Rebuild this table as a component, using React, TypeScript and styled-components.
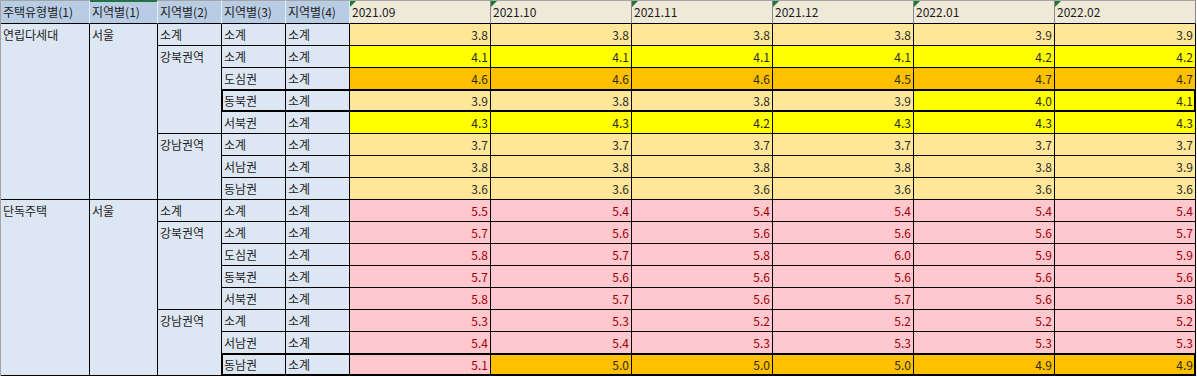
import React from "react";
import styled, { createGlobalStyle, css } from "styled-components";

const GlobalStyle = createGlobalStyle`
  html, body { margin: 0; padding: 0; background: #ffffff; }
  body { font-family: "Noto Sans CJK KR", "Noto Sans", sans-serif; }
`;

type Tone = "sand" | "yellow" | "amber" | "rose";
type Edge = "start" | "mid" | "end";

const toneBg: Record<Tone, string> = {
  sand: "#ffe699",
  yellow: "#ffff00",
  amber: "#ffc000",
  rose: "#ffc7ce",
};
const toneInk: Record<Tone, string> = {
  sand: "#2b2b2b",
  yellow: "#2b2b10",
  amber: "#2b2b10",
  rose: "#9c0006",
};

const Sheet = styled.div`
  display: grid;
  grid-template-columns: 89px 68px 64px 64px 64px repeat(6, 141px);
  grid-template-rows: 24px repeat(16, 22px);
  width: max-content;
  border-left: 1px solid #a3a3a3;
  font-size: 12px;
  color: #1c1c1c;
`;

const HeadCell = styled.div<{ $kind: "dim" | "date"; $active?: boolean }>`
  position: relative;
  box-sizing: border-box;
  border-top: 1px solid ${(p) => (p.$active ? "#217346" : "#a3a3a3")};
  border-bottom: 1px solid #000;
  border-right: 1px solid ${(p) => (p.$kind === "dim" ? "#e4ebf4" : "#8a8a8a")};
  background: ${(p) => (p.$kind === "dim" ? "#b8cce4" : "#efe9d8")};
  ${(p) => p.$active && css`box-shadow: inset 0 1px 0 #217346;`}
  padding: 0 2px;
  line-height: 22px;
  white-space: nowrap;
  overflow: hidden;
  ${(p) =>
    p.$kind === "date" &&
    css`
      &::before {
        content: "";
        position: absolute;
        top: 0;
        left: 0;
        border-top: 6px solid #1d7a35;
        border-right: 6px solid transparent;
      }
    `}
`;

const frameShadow = (framed?: boolean, edge?: Edge) => {
  if (!framed) return "";
  const s = ["inset 0 1px 0 #000", "inset 0 -1px 0 #000"];
  if (edge === "start") s.push("inset 1px 0 0 #000");
  if (edge === "end") s.push("inset -1px 0 0 #000");
  return css`box-shadow: ${s.join(", ")};`;
};

const LabelCell = styled.div<{ $span?: number; $framed?: boolean; $edge?: Edge }>`
  box-sizing: border-box;
  grid-row: span ${(p) => p.$span ?? 1};
  background: #dde7f3;
  border-right: 1px solid #000;
  border-bottom: 1px solid #000;
  padding: 0 2px;
  line-height: 21px;
  white-space: nowrap;
  overflow: hidden;
  ${(p) => frameShadow(p.$framed, p.$edge)}
`;

const ValueCell = styled.div<{ $tone: Tone; $framed?: boolean; $edge?: Edge }>`
  box-sizing: border-box;
  background: ${(p) => toneBg[p.$tone]};
  color: ${(p) => toneInk[p.$tone]};
  border-right: 1px solid #000;
  border-bottom: 1px solid #000;
  padding: 0 2px 0 0;
  text-align: right;
  line-height: 21px;
  white-space: nowrap;
  ${(p) => frameShadow(p.$framed, p.$edge)}
`;

type Span = [string, number];
interface Row {
  house?: Span;
  city?: Span;
  zone?: Span;
  sub: string;
  values: string;
  tones: Tone[];
  framed?: boolean;
}

const S: Tone = "sand";
const Y: Tone = "yellow";
const A: Tone = "amber";
const R: Tone = "rose";
const all = (t: Tone): Tone[] => [t, t, t, t, t, t];

const rows: Row[] = [
  { house: ["연립다세대", 8], city: ["서울", 8], zone: ["소계", 1], sub: "소계", values: "3.8 3.8 3.8 3.8 3.9 3.9", tones: all(S) },
  { zone: ["강북권역", 4], sub: "소계", values: "4.1 4.1 4.1 4.1 4.2 4.2", tones: all(Y) },
  { sub: "도심권", values: "4.6 4.6 4.6 4.5 4.7 4.7", tones: all(A) },
  { sub: "동북권", values: "3.9 3.8 3.8 3.9 4.0 4.1", tones: [S, S, S, S, Y, Y], framed: true },
  { sub: "서북권", values: "4.3 4.3 4.2 4.3 4.3 4.3", tones: all(Y) },
  { zone: ["강남권역", 3], sub: "소계", values: "3.7 3.7 3.7 3.7 3.7 3.7", tones: all(S) },
  { sub: "서남권", values: "3.8 3.8 3.8 3.8 3.8 3.9", tones: all(S) },
  { sub: "동남권", values: "3.6 3.6 3.6 3.6 3.6 3.6", tones: all(S) },
  { house: ["단독주택", 8], city: ["서울", 8], zone: ["소계", 1], sub: "소계", values: "5.5 5.4 5.4 5.4 5.4 5.4", tones: all(R) },
  { zone: ["강북권역", 4], sub: "소계", values: "5.7 5.6 5.6 5.6 5.6 5.7", tones: all(R) },
  { sub: "도심권", values: "5.8 5.7 5.8 6.0 5.9 5.9", tones: all(R) },
  { sub: "동북권", values: "5.7 5.6 5.6 5.6 5.6 5.6", tones: all(R) },
  { sub: "서북권", values: "5.8 5.7 5.6 5.7 5.6 5.8", tones: all(R) },
  { zone: ["강남권역", 3], sub: "소계", values: "5.3 5.3 5.2 5.2 5.2 5.2", tones: all(R) },
  { sub: "서남권", values: "5.4 5.4 5.3 5.3 5.3 5.3", tones: all(R) },
  { sub: "동남권", values: "5.1 5.0 5.0 5.0 4.9 4.9", tones: [R, A, A, A, A, A], framed: true },
];

const dimHeads = ["주택유형별(1)", "지역별(1)", "지역별(2)", "지역별(3)", "지역별(4)"];
const dates = ["2021.09", "2021.10", "2021.11", "2021.12", "2022.01", "2022.02"];

export default function App() {
  return (
    <>
      <GlobalStyle />
      <Sheet>
        {dimHeads.map((h, i) => (
          <HeadCell key={h} $kind="dim" $active={i === 1}>
            {h}
          </HeadCell>
        ))}
        {dates.map((d) => (
          <HeadCell key={d} $kind="date">
            {d}
          </HeadCell>
        ))}
        {rows.map((r, ri) => {
          const vals = r.values.split(" ");
          return (
            <React.Fragment key={ri}>
              {r.house && <LabelCell $span={r.house[1]}>{r.house[0]}</LabelCell>}
              {r.city && <LabelCell $span={r.city[1]}>{r.city[0]}</LabelCell>}
              {r.zone && <LabelCell $span={r.zone[1]}>{r.zone[0]}</LabelCell>}
              <LabelCell $framed={r.framed} $edge="start">
                {r.sub}
              </LabelCell>
              <LabelCell $framed={r.framed} $edge="mid">
                소계
              </LabelCell>
              {vals.map((v, vi) => (
                <ValueCell
                  key={vi}
                  $tone={r.tones[vi]}
                  $framed={r.framed}
                  $edge={vi === vals.length - 1 ? "end" : "mid"}
                >
                  {v}
                </ValueCell>
              ))}
            </React.Fragment>
          );
        })}
      </Sheet>
    </>
  );
}
